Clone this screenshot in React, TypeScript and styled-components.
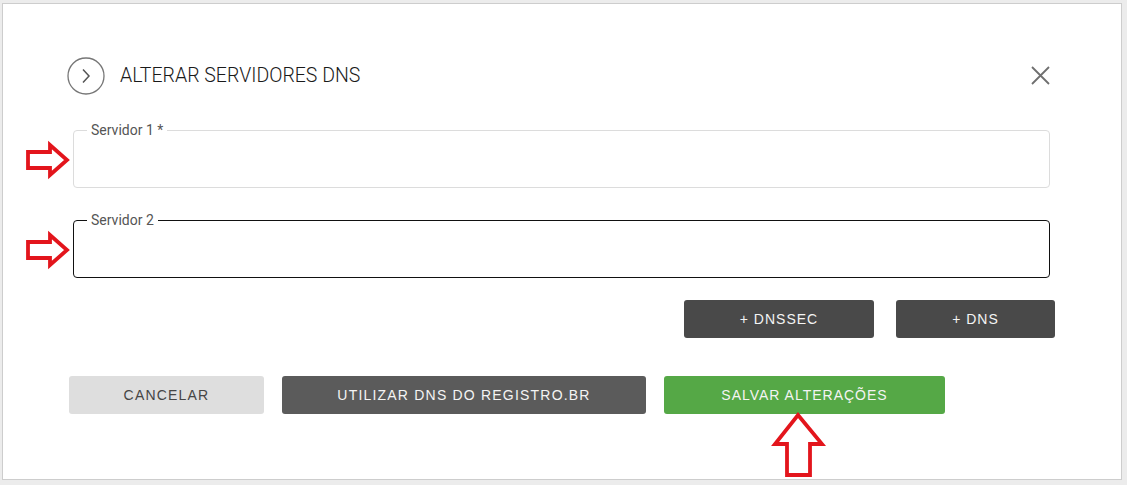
import React from "react";
import styled, { createGlobalStyle } from "styled-components";

const Global = createGlobalStyle`
  html, body { margin: 0; padding: 0; background: #ececec; }
  body { font-family: Roboto, "Liberation Sans", Arial, sans-serif; }
  * { box-sizing: border-box; }
`;

const Page = styled.div`
  position: relative;
  width: 1127px;
  height: 485px;
  padding: 3px 0 0 2px;
`;

const Panel = styled.div`
  width: 1120px;
  height: 477px;
  background: #fff;
  border: 1px solid #cdcdcd;
  display: flex;
  flex-direction: column;
`;

const Header = styled.div`
  display: flex;
  align-items: center;
  height: 37px;
  margin-top: 53px;
  padding: 0 71px 0 64px;
`;

const Title = styled.h1`
  margin: 0 0 0 15px;
  flex: 1;
  font-family: Roboto, sans-serif;
  font-weight: 300;
  font-size: 19.5px;
  color: #1a1a1a;
  letter-spacing: 0;
`;

const CloseButton = styled.button`
  border: 0;
  background: none;
  padding: 0;
  width: 20px;
  height: 20px;
  display: flex;
  align-items: center;
  justify-content: center;
  cursor: pointer;
`;

const Fields = styled.div`
  display: flex;
  flex-direction: column;
  gap: 25px;
  margin-top: 29px;
  padding: 0 71px 0 70px;
`;

const Field = styled.fieldset<{ $focused?: boolean }>`
  margin: 0;
  padding: 0 16px;
  border: ${(p) => (p.$focused ? "1.5px solid #111" : "1px solid #dcdcdc")};
  border-radius: 4px;
  min-width: 0;
`;

const Legend = styled.legend`
  margin-left: -3px;
  padding: 0 4px;
  font-family: Roboto, sans-serif;
  font-size: 14px;
  line-height: 14px;
  color: #555;
`;

const Input = styled.input`
  display: block;
  width: 100%;
  height: 50px;
  border: 0;
  outline: none;
  background: transparent;
  font-family: Roboto, sans-serif;
  font-size: 14px;
`;

const ExtraRow = styled.div`
  display: flex;
  justify-content: flex-end;
  gap: 22px;
  margin-top: 22px;
  padding-right: 66px;
`;

const Button = styled.button<{ $variant: "dark" | "gray" | "light" | "green"; $w: number }>`
  width: ${(p) => p.$w}px;
  height: 38px;
  border: 0;
  border-radius: 3px;
  font-family: "Liberation Sans", Arial, sans-serif;
  font-size: 14px;
  letter-spacing: ${(p) => (p.$variant === "light" || p.$variant === "gray" ? "1.2px" : "1px")};
  cursor: pointer;
  background: ${(p) =>
    p.$variant === "dark" ? "#494949" : p.$variant === "gray" ? "#5b5b5b" : p.$variant === "green" ? "#55a846" : "#dedede"};
  color: ${(p) => (p.$variant === "light" ? "#454545" : "#f4f4f4")};
`;

const ActionRow = styled.div`
  display: flex;
  gap: 18px;
  margin-top: 38px;
  padding-left: 66px;
`;

const Annotation = styled.svg<{ $x: number; $y: number }>`
  position: absolute;
  left: ${(p) => p.$x}px;
  top: ${(p) => p.$y}px;
  pointer-events: none;
  overflow: visible;
`;

const RightArrow = ({ x, y }: { x: number; y: number }) => (
  <Annotation $x={x} $y={y} width="46" height="36" viewBox="0 0 46 36">
    <polygon
      points="3,9 25,9 25,2 42,17 25,32 25,25 3,25"
      fill="#fff"
      stroke="#e3151c"
      strokeWidth="3.8"
      strokeLinejoin="miter"
    />
  </Annotation>
);

const UpArrow = ({ x, y }: { x: number; y: number }) => (
  <Annotation $x={x} $y={y} width="56" height="66" viewBox="0 0 56 66">
    <polygon
      points="27,2 51,31 39,31 39,62 16,62 16,31 4,31"
      fill="#fff"
      stroke="#e3151c"
      strokeWidth="3.8"
      strokeLinejoin="miter"
    />
  </Annotation>
);

export default function App() {
  return (
    <>
      <Global />
      <Page>
        <Panel>
          <Header>
            <svg width="38" height="38" viewBox="0 0 38 38">
              <circle cx="19" cy="19" r="18" fill="none" stroke="#777" strokeWidth="1.3" />
              <polyline points="16,12.5 22,19 16,25.5" fill="none" stroke="#555" strokeWidth="1.5" />
            </svg>
            <Title>ALTERAR SERVIDORES DNS</Title>
            <CloseButton aria-label="Fechar">
              <svg width="19" height="19" viewBox="0 0 19 19">
                <path d="M1 1 L18 18 M18 1 L1 18" stroke="#6f6f6f" strokeWidth="1.8" />
              </svg>
            </CloseButton>
          </Header>
          <Fields>
            <Field>
              <Legend>Servidor 1 *</Legend>
              <Input />
            </Field>
            <Field $focused>
              <Legend>Servidor 2</Legend>
              <Input />
            </Field>
          </Fields>
          <ExtraRow>
            <Button $variant="dark" $w={190}>+ DNSSEC</Button>
            <Button $variant="dark" $w={159}>+ DNS</Button>
          </ExtraRow>
          <ActionRow>
            <Button $variant="light" $w={195}>CANCELAR</Button>
            <Button $variant="gray" $w={364}>UTILIZAR DNS DO REGISTRO.BR</Button>
            <Button $variant="green" $w={281}>SALVAR ALTERAÇÕES</Button>
          </ActionRow>
        </Panel>
        <RightArrow x={25} y={143} />
        <RightArrow x={25} y={233} />
        <UpArrow x={771} y={413} />
      </Page>
    </>
  );
}
